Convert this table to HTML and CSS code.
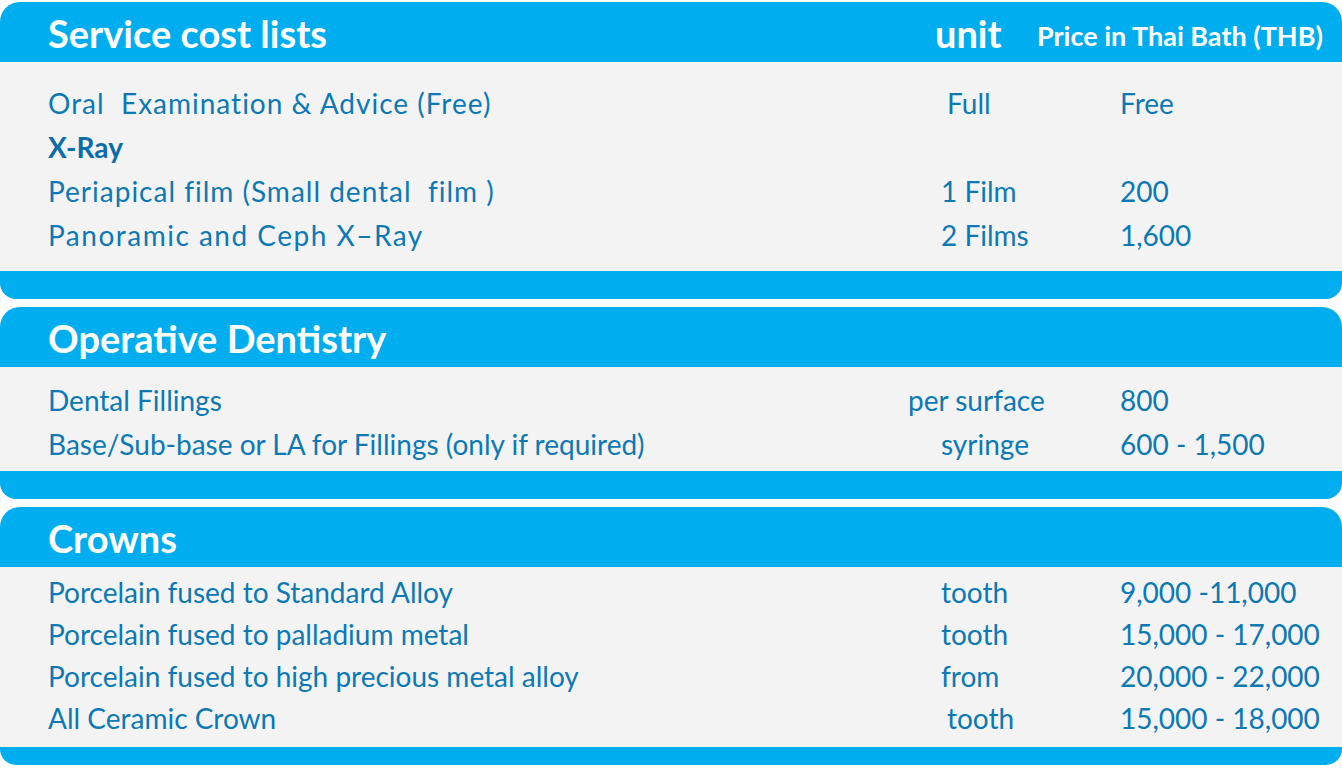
FILE: index.html
```html
<!DOCTYPE html>
<html>
<head>
<meta charset="utf-8">
<link rel="stylesheet" href="styles.css">
</head>
<body>
<div class="sheet">
  <section class="card">
    <header class="card-head">
      <h2 class="title">Service cost lists</h2>
      <span class="h-unit">unit</span>
      <span class="h-price">Price in Thai Bath (THB)</span>
    </header>
    <div class="card-body body-a">
      <div class="row"><span class="name spaced">Oral&nbsp; Examination &amp; Advice (Free)</span><span class="unit ind">Full</span><span class="price">Free</span></div>
      <div class="row"><span class="name strong">X-Ray</span><span class="unit"></span><span class="price"></span></div>
      <div class="row"><span class="name spaced">Periapical film (Small dental&nbsp; film )</span><span class="unit">1 Film</span><span class="price">200</span></div>
      <div class="row"><span class="name spaced-more">Panoramic and Ceph X–Ray</span><span class="unit">2 Films</span><span class="price">1,600</span></div>
    </div>
    <div class="card-foot"></div>
  </section>

  <section class="card">
    <header class="card-head">
      <h2 class="title">Operative Dentistry</h2>
    </header>
    <div class="card-body body-b">
      <div class="row"><span class="name">Dental Fillings</span><span class="unit wide">per surface</span><span class="price">800</span></div>
      <div class="row"><span class="name">Base/Sub-base or LA for Fillings (only if required)</span><span class="unit">syringe</span><span class="price">600 - 1,500</span></div>
    </div>
    <div class="card-foot"></div>
  </section>

  <section class="card">
    <header class="card-head">
      <h2 class="title">Crowns</h2>
    </header>
    <div class="card-body body-c">
      <div class="row tight"><span class="name">Porcelain fused to Standard Alloy</span><span class="unit">tooth</span><span class="price">9,000 -11,000</span></div>
      <div class="row tight"><span class="name">Porcelain fused to palladium metal</span><span class="unit">tooth</span><span class="price">15,000 - 17,000</span></div>
      <div class="row tight"><span class="name">Porcelain fused to high precious metal alloy</span><span class="unit">from</span><span class="price">20,000 - 22,000</span></div>
      <div class="row tight"><span class="name">All Ceramic Crown</span><span class="unit ind">tooth</span><span class="price">15,000 - 18,000</span></div>
    </div>
    <div class="card-foot last"></div>
  </section>
</div>
</body>
</html>
```

FILE: styles.css
```css
html, body {
  margin: 0;
  padding: 0;
  background: #ffffff;
}

body {
  width: 1342px;
  height: 768px;
  overflow: hidden;
  font-family: Lato, "Open Sans", sans-serif;
}

.sheet {
  padding-top: 2px;
  display: flex;
  flex-direction: column;
  gap: 8px;
}

.card {
  display: flex;
  flex-direction: column;
}

.card-head {
  height: 60px;
  background: #00aeef;
  border-radius: 20px 20px 0 0;
  display: grid;
  grid-template-columns: 887px 102px 1fr;
  align-items: center;
  padding-left: 48px;
  color: #ffffff;
  box-sizing: border-box;
}

.title {
  margin: 0;
  font-size: 38px;
  font-weight: 700;
  padding-top: 1px;
  white-space: nowrap;
}

.h-unit {
  font-size: 38px;
  font-weight: 700;
  padding-top: 1px;
}

.h-price {
  font-size: 27px;
  font-weight: 700;
  padding-top: 6px;
  white-space: nowrap;
}

.card-body {
  background: #f3f3f3;
  box-sizing: border-box;
}

.body-a {
  height: 209px;
  padding-top: 19px;
}

.body-b {
  height: 104px;
  padding-top: 11px;
}

.body-c {
  height: 180px;
  padding-top: 4px;
}

.row {
  display: grid;
  grid-template-columns: 893px 179px 1fr;
  padding-left: 48px;
  height: 44px;
  align-items: center;
  font-size: 28px;
  color: #0b79b5;
  white-space: nowrap;
}

.row.tight {
  height: 42px;
}

.name.spaced {
  letter-spacing: 1px;
}

.name.spaced-more {
  letter-spacing: 1.5px;
}

.name.strong {
  font-weight: 700;
  color: #0a6da8;
}

.unit.ind {
  padding-left: 6px;
}

.unit.wide {
  margin-left: -33px;
}

.card-foot {
  height: 28px;
  background: #00aeef;
  border-radius: 0 0 16px 16px;
}

.card-foot.last {
  height: 18px;
}
```
